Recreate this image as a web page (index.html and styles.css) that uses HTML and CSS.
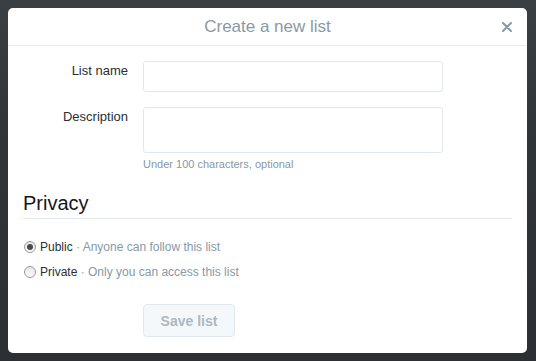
FILE: index.html
```html
<!DOCTYPE html>
<html lang="en">
<head>
  <meta charset="UTF-8" />
  <title>Create a new list</title>
  <link rel="stylesheet" href="styles.css">
</head>
<body>
  <div class="modal">
    <div class="modal-header">
      <h3 class="modal-title">Create a new list</h3>
      <button class="close-button" aria-label="Close">
        <svg width="10" height="10" viewBox="0 0 10 10"><path d="M1 1 L9 9 M9 1 L1 9" stroke="#8899a6" stroke-width="2" stroke-linecap="round"/></svg>
      </button>
    </div>

    <div class="modal-body">
      <div class="form-row">
        <label class="form-label" for="list-name">List name</label>
        <input class="text-input" id="list-name" type="text" />
      </div>

      <div class="form-row">
        <label class="form-label" for="list-desc">Description</label>
        <div class="field">
          <textarea class="text-input desc-input" id="list-desc"></textarea>
          <p class="hint">Under 100 characters, optional</p>
        </div>
      </div>

      <h2 class="section-title">Privacy</h2>

      <div class="radio-list">
        <label class="radio-row">
          <input class="radio" type="radio" name="privacy" checked />
          <b>Public</b><span class="radio-note"> · Anyone can follow this list</span>
        </label>
        <label class="radio-row">
          <input class="radio" type="radio" name="privacy" />
          <b>Private</b><span class="radio-note"> · Only you can access this list</span>
        </label>
      </div>

      <div class="actions">
        <button class="save-button" disabled>Save list</button>
      </div>
    </div>
  </div>
</body>
</html>
```

FILE: styles.css
```css
* {
  margin: 0;
  padding: 0;
  box-sizing: border-box;
}

body {
  font-family: "Liberation Sans", Arial, sans-serif;
  background: linear-gradient(180deg, #3a3f44 0%, #2f3439 40%, #2c3035 100%);
  height: 361px;
  padding: 8px;
  overflow: hidden;
}

.modal {
  width: 519px;
  height: 345px;
  background: #fff;
  border-radius: 5px;
}

.modal-header {
  position: relative;
  height: 38px;
  border-bottom: 1px solid #e6ecf0;
  display: flex;
  align-items: center;
  justify-content: center;
}

.modal-title {
  font-size: 17px;
  font-weight: normal;
  color: #8899a6;
}

.close-button {
  position: absolute;
  right: 15px;
  top: 14px;
  border: none;
  background: none;
  width: 10px;
  height: 10px;
  display: flex;
}

.modal-body {
  padding: 15px 15px 0;
}

.form-row {
  display: flex;
  margin-bottom: 15px;
}

.form-label {
  width: 105px;
  margin-right: 15px;
  padding-top: 2px;
  text-align: right;
  font-size: 13px;
  color: #292f33;
  flex-shrink: 0;
}

.text-input {
  display: block;
  width: 300px;
  height: 31px;
  border: 1px solid #e1e8ed;
  border-radius: 3px;
  font-family: inherit;
  font-size: 14px;
  resize: none;
  outline: none;
}

.desc-input {
  height: 46px;
}

.hint {
  margin-top: 5px;
  font-size: 11px;
  color: #8899a6;
}

.section-title {
  margin-top: 22px;
  font-size: 20px;
  font-weight: normal;
  color: #14171a;
  padding-bottom: 3px;
  border-bottom: 1px solid #e1e8ed;
}

.radio-list {
  margin-top: 19px;
  display: flex;
  flex-direction: column;
  gap: 8px;
}

.radio-row {
  display: flex;
  align-items: center;
  font-size: 12px;
  color: #292f33;
  height: 17px;
}

.radio-row b {
  font-weight: normal;
  margin-left: 4px;
}

.radio {
  appearance: none;
  -webkit-appearance: none;
  width: 12px;
  height: 12px;
  margin: 0 0 0 1px;
  border: 1px solid #9a9a9a;
  border-radius: 50%;
  background: linear-gradient(180deg, #e6e6e6, #fbfbfb);
  position: relative;
}

.radio:checked::after {
  content: '';
  position: absolute;
  top: 2px;
  left: 2px;
  width: 6px;
  height: 6px;
  border-radius: 50%;
  background: #4b4b4b;
}

.radio-note {
  color: #8899a6;
  white-space: pre;
}

.actions {
  margin-top: 24px;
  padding-left: 120px;
}

.save-button {
  width: 92px;
  height: 33px;
  border: 1px solid #e1e8ed;
  border-radius: 4px;
  background: #f5f8fa;
  color: #aab8c2;
  font-family: inherit;
  font-size: 14px;
  font-weight: bold;
}
```
